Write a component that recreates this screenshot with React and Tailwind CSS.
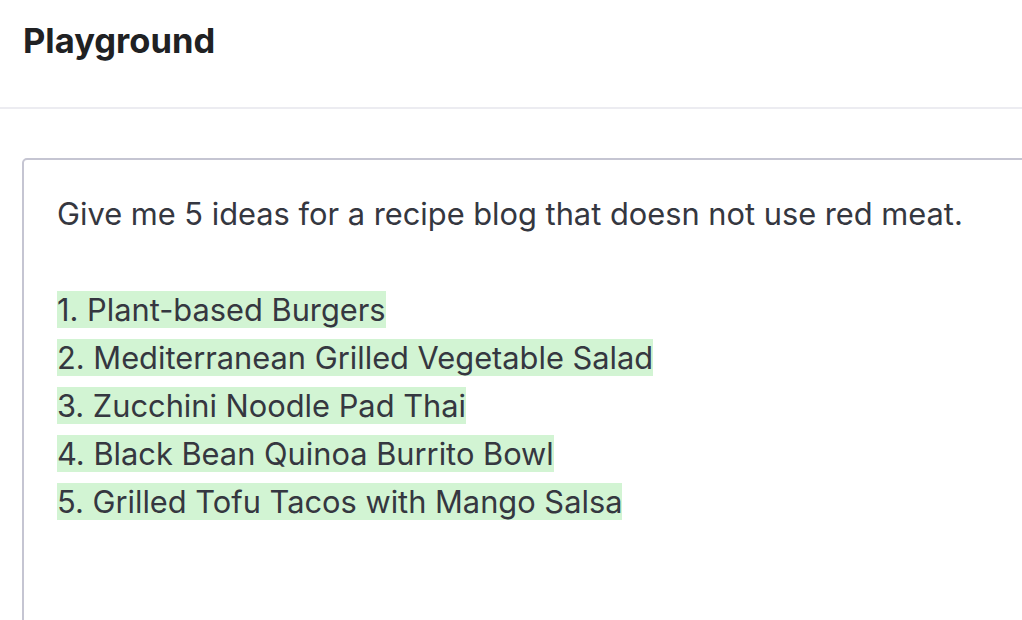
export default function App() {
  const ideas = [
    "1. Plant-based Burgers",
    "2. Mediterranean Grilled Vegetable Salad",
    "3. Zucchini Noodle Pad Thai",
    "4. Black Bean Quinoa Burrito Bowl",
    "5. Grilled Tofu Tacos with Mango Salsa",
  ];

  return (
    <div className="h-[620px] w-[1022px] overflow-hidden bg-white font-['Inter',sans-serif] text-[#353740]">
      <header className="flex h-[109px] items-start border-b-2 border-[#ececf1] pl-[23px] pt-[20px]">
        <h1 className="text-[34.5px] font-bold leading-[42px] text-[#202123]">Playground</h1>
      </header>

      <main className="pl-[22px] pt-[49px]">
        <div className="h-[520px] w-[1100px] rounded-[5px] border-2 border-[#c5c5d2] pl-[33px] pr-[34px] pt-[30px]">
          <p className="text-[30.8px] leading-[48px]">Give me 5 ideas for a recipe blog that doesn not use red meat.</p>
          <div className="h-[48px]" />
          {ideas.map((idea) => (
            <p key={idea} className="text-[30.8px] leading-[48px]">
              <span className="bg-[#d2f4d3]">{idea}</span>
            </p>
          ))}
        </div>
      </main>
    </div>
  );
}
